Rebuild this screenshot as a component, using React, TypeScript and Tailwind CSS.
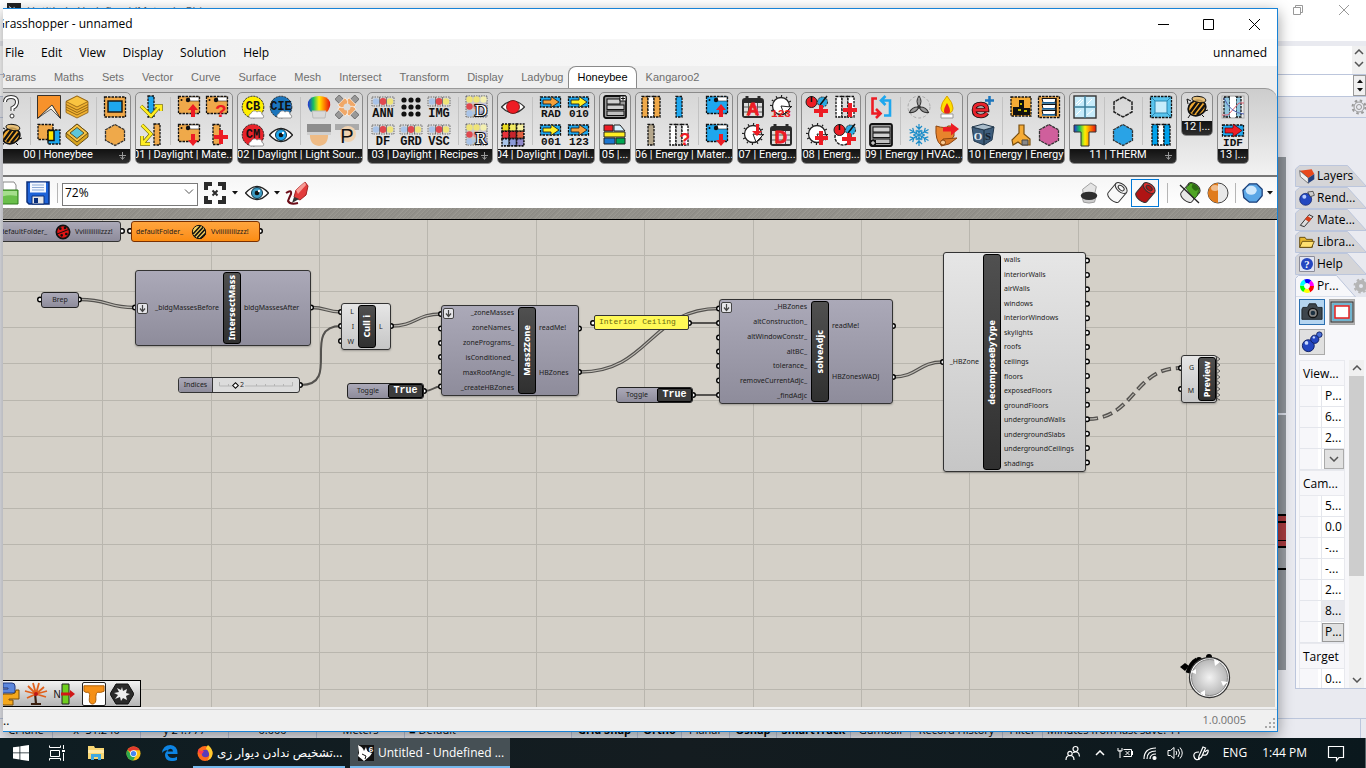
import React from "react";

type Kids = { children?: React.ReactNode };

const UI = "font-['Open_Sans','Noto_Sans',sans-serif]";
const GH = "font-['Liberation_Sans',Arial,sans-serif]";

function Svg({ children, size = "size-6" }: Kids & { size?: string }) {
  return (
    <svg viewBox="0 0 24 24" className={`${size} shrink-0`} aria-hidden="true" fill="none">
      {children}
    </svg>
  );
}

/* ---------- ribbon icon pieces ---------- */

const dash = { stroke: "#111", strokeWidth: 1.3, strokeDasharray: "2.5 1" };

function Label({ t, x = 12, y = 22, s = 9, fill = "#111" }: { t: string; x?: number; y?: number; s?: number; fill?: string }) {
  return (
    <text x={x} y={y} fontSize={s} fontWeight="bold" fill={fill} textAnchor="middle" fontFamily="Liberation Mono, monospace">
      {t}
    </text>
  );
}

function Disc({ c, t }: { c: string; t: string }) {
  return (
    <Svg>
      <circle cx="12" cy="12" r="10.8" fill={c} stroke="#222" strokeWidth="1" strokeDasharray="2 1" />
      <Label t={t} y={15} s={12} />
      <path d="M9 23a2.500 2.500 0 0 1 1-4.500 3.500 3.500 0 0 1 6-1.500 3 3 0 0 1 5 2.500 2 2 0 0 1 1 3.500z" fill="#fff" stroke="#777" strokeWidth=".7" />
    </Svg>
  );
}

function PaintBox({ c, mark }: { c: string; mark: string }) {
  return (
    <Svg>
      <rect x="1.5" y="1.5" width="21" height="17" fill={c} {...dash} />
      <path d="M12 2h10v4H13z" fill="#fff" stroke="#222" strokeWidth=".6" />
      <circle cx="11" cy="5" r="2.2" fill="#111" />
      <circle cx="4.5" cy="5" r="1" fill="#111" />
      {mark === "up" && <path d="M16 9l5 6h-3v7h-4v-7h-3z" fill="#ed1c24" />}
      {mark === "down" && <path d="M16 23l-5-6h3v-6h4v6h3z" fill="#ed1c24" />}
      {mark === "?" && <Label t="?" x={16} y={22} s={19} fill="#ed1c24" />}
    </Svg>
  );
}

function Film({ t }: { t: string }) {
  return (
    <Svg>
      <rect x="1" y="2" width="22" height="9" fill="#d8d8d8" stroke="#555" strokeWidth=".8" strokeDasharray="1.500 1" />
      <circle cx="5" cy="6.500" r="3.200" fill="#a9c4e8" />
      <circle cx="12" cy="6.500" r="3.400" fill="#e0484f" />
      <circle cx="19" cy="6.500" r="3.200" fill="#efe478" />
      <path d="M8.500 2v9M15.500 2v9" stroke="#555" strokeWidth=".7" />
      <Label t={t} y={21.5} s={12} />
    </Svg>
  );
}

function Letters({ t }: { t: string }) {
  const cs = ["#efe478", "#efe478", "#f3efb0", "#e0484f", "#e58a8a", "#c9c0e0", "#a9c4e8", "#a9c4e8", "#9aa0d0"];
  return (
    <Svg>
      <rect x="1" y="1" width="21" height="21" fill="#c9c9c9" stroke="#444" strokeWidth=".8" strokeDasharray="1.500 1" />
      {cs.map((c, i) => (
        <circle key={i} cx={4.5 + (i % 3) * 7} cy={4.5 + Math.floor(i / 3) * 7} r="3.200" fill={c} />
      ))}
      <text x="16" y="21" fontSize="17" textAnchor="middle" fill="#fff" stroke="#111" strokeWidth="2.200" paintOrder="stroke" fontFamily="Liberation Serif, serif">
        {t}
      </text>
    </Svg>
  );
}

function Arrow({ t, c }: { t: string; c: string }) {
  return (
    <Svg>
      <rect x="1.500" y="2" width="20" height="10" fill="#1ea7ee" {...dash} />
      <path d="M4 5h8V1.500l8 5.500-8 5.500V9H4z" fill={c} stroke="#222" strokeWidth=".9" />
      <Label t={t} y={21.5} s={11} />
    </Svg>
  );
}

function Wall({ fills, extra }: { fills: string[]; extra?: string }) {
  const w = 18 / fills.length;
  return (
    <Svg>
      {fills.map((f, i) => (
        <rect key={i} x={3 + i * w} y="1.500" width={w} height="20.500" fill={f} {...dash} />
      ))}
      {extra === "+" && <path d="M10 13h5V8h4v5h5v4h-5v5h-4v-5h-5z" fill="#ed1c24" />}
      {extra === "?" && <Label t="?" x={18} y={22} s={18} fill="#ed1c24" />}
    </Svg>
  );
}

function Clock({ extra }: { extra?: string }) {
  return (
    <Svg>
      <circle cx="12" cy="11" r="8.500" fill="#fff" stroke="#222" strokeWidth="1.300" />
      <circle cx="12" cy="11" r="10" stroke="#222" strokeWidth="2" strokeDasharray="1.200 4" />
      <path d="M12 11l10 1-7 7z" fill="#fff" stroke="#222" strokeWidth="1" />
      {extra === "123" && <Label t="123" y={22} s={11} fill="#ed1c24" />}
      {extra === "v" && <path d="M15 1h3v7h3l-5 5-5-5h4z" fill="#ed1c24" />}
      {extra === "+" && <path d="M10 13h4V8h4v5h5v4h-5v5h-4v-5h-4z" fill="#ed1c24" />}
    </Svg>
  );
}

function Calendar({ t }: { t: string }) {
  return (
    <Svg>
      <rect x="1" y="3" width="22" height="20" rx="3" fill="#2b2b2b" />
      <path d="M6 1v4M18 1v4" stroke="#2b2b2b" strokeWidth="3" />
      <path d="M3 8h18v13H3z" fill="#ddd" />
      <path d="M3 12h18M3 17h18M7.500 8v13M16.500 8v13" stroke="#555" />
      <text x="12" y="20" fontSize="17" fontWeight="bold" textAnchor="middle" fill="#ed1c24" stroke="#ed1c24" fontFamily="Liberation Sans, sans-serif">
        {t}
      </text>
    </Svg>
  );
}

function Knobs({ clock }: { clock?: boolean }) {
  return (
    <Svg>
      {clock && <circle cx="10" cy="14" r="8" fill="#fff" stroke="#222" strokeDasharray="3 1" strokeWidth="1.500" />}
      <circle cx="6.500" cy="7" r="5.500" fill="#ed1c24" stroke="#222" />
      <circle cx="17.500" cy="7" r="5" fill="#29a8e0" stroke="#222" strokeDasharray="2 1" />
      <path d="M6.500 7V1M15 10l7-9" stroke="#111" strokeWidth="1.500" />
      <path d="M9 14h5v-4h4v4h5v4h-5v4h-4v-4H9z" fill="#ed1c24" />
    </Svg>
  );
}

function Hexa({ c }: { c: string }) {
  return (
    <Svg>
      <path d="M12 1.500l9.500 5.300v10.500L12 22.500 2.500 17.300V6.800z" fill={c} stroke="#333" strokeWidth="1.300" strokeDasharray="3 .8" />
    </Svg>
  );
}

function Drawers({ flip }: { flip?: boolean }) {
  return (
    <Svg>
      <rect x="1" y="1" width="22" height="22" rx="2" fill="#999" stroke="#111" strokeWidth="1.800" />
      <rect x="4" y="4" width={flip ? 17 : 13} height="5" fill="#d0d0d0" stroke="#111" />
      <rect x="4" y="10" width="17" height="4.500" fill="#d0d0d0" stroke="#111" />
      <rect x="4" y="16" width="17" height="4.500" fill="#c0c0c0" stroke="#111" />
      {flip ? (
        <>
          <path d="M1 17h6v6H1z" fill="#111" />
          <path d="M2 20h4M4 18v4" stroke="#fff" />
        </>
      ) : (
        <path d="M17 1h6v5h-6zM18 3.500h4M20 1.500v4" fill="#fff" stroke="#111" />
      )}
    </Svg>
  );
}

function Bee() {
  return (
    <Svg>
      <ellipse cx="12" cy="13" rx="9" ry="7.500" transform="rotate(-25 12 13)" fill="#f0a830" stroke="#111" strokeWidth="1.800" />
      <path d="M5 17L13 6M8 19l9-12M12 20l8-10" stroke="#111" strokeWidth="2.400" />
      <ellipse cx="14" cy="4.500" rx="7" ry="3" fill="#e8b860" fillOpacity=".8" stroke="#111" transform="rotate(8 14 4)" />
      <path d="M3 9l-1-5 4 2M20 16l3-1M17 20l2 2M5 20l-2 3" stroke="#111" />
    </Svg>
  );
}

function EyeIcon({ iris = "#1ea7ee" }: { iris?: string }) {
  return (
    <Svg>
      <path d="M.5 12Q12-1 23.500 12 12 25 .5 12z" fill="#fff" stroke="#222" strokeWidth="1.300" />
      <circle cx="12" cy="12" r="5.500" fill={iris} stroke="#134" />
      <circle cx="12" cy="12" r="2.300" fill="#111" />
      <circle cx="14" cy="10" r="1.200" fill="#fff" />
    </Svg>
  );
}

const icons: Record<string, React.ReactNode> = {
  question: (
    <Svg>
      <path d="M6 7q0-5 6-5t6 5q0 4-4.500 6v3" stroke="#333" strokeWidth="4" />
      <path d="M6 7q0-5 6-5t6 5q0 4-4.500 6v3" stroke="#fff" strokeWidth="2" />
      <circle cx="13" cy="21" r="2" fill="#fff" stroke="#333" />
    </Svg>
  ),
  bee: <Bee />,
  mass: (
    <Svg>
      <path d="M.5.5h23v23L15 10 .5 23.500z" fill="#f7922b" stroke="#222" strokeWidth=".9" />
      <path d="M1 23L15 10l8 13-9-9z" fill="#fff3df" stroke="#222" strokeWidth=".7" />
    </Svg>
  ),
  zones: (
    <Svg>
      <rect x="1" y="1.500" width="15" height="15" fill="#f0a848" {...dash} />
      <rect x="11" y="7" width="12" height="14" fill="#1ea7ee" {...dash} />
      <rect x="11" y="7.500" width="6" height="10" fill="#ffe600" stroke="#111" strokeWidth="1.500" />
    </Svg>
  ),
  stack: (
    <Svg>
      <path d="M12 1l11 5.500v11L12 23 1 17.500v-11z" fill="#f0b232" stroke="#8a5c10" strokeWidth=".8" />
      <path d="M1 9.500L12 15l11-5.500M1 12l11 5.500L23 12M1 14.500L12 20l11-5.500" stroke="#8a5c10" strokeWidth=".9" />
      <path d="M12 1l11 5.500L12 12 1 6.500z" fill="#f9c440" stroke="#8a5c10" strokeWidth=".8" />
    </Svg>
  ),
  layers: (
    <Svg>
      <path d="M12 1l11 9v4l-11 9L1 14v-4z" fill="#d9a520" stroke="#5b4310" strokeWidth=".9" />
      <path d="M12 1l11 9-11 9L1 10z" fill="#f6c447" stroke="#5b4310" strokeWidth=".9" />
      <path d="M12 4.500l7 5.500-7 5.500L5 10z" fill="#5dc6d8" stroke="#5b4310" strokeWidth=".9" />
    </Svg>
  ),
  frame: (
    <Svg>
      <rect x="1.500" y="2" width="21" height="20" fill="#f0a848" {...dash} />
      <rect x="5" y="6" width="14" height="11" fill="#1ea7ee" stroke="#111" strokeWidth="1.400" />
    </Svg>
  ),
  hexOrange: <Hexa c="#efa94a" />,
  hexBlue: <Hexa c="#29a3e6" />,
  hexPink: <Hexa c="#cf5f9c" />,
  hexLine: (
    <Svg>
      <path d="M12 2l9 5v10l-9 5-9-5V7z" stroke="#222" strokeWidth="1.500" strokeDasharray="4 .8" />
    </Svg>
  ),
  ray1: (
    <Svg>
      <rect x="9" y="1" width="6" height="21" fill="#1ea7ee" {...dash} />
      <path d="M2 11l10 10 9-10M16 11h6v5" stroke="#5b5300" strokeWidth="3.600" />
      <path d="M2 11l10 10 9-10M16 11h6v5" stroke="#ffee22" strokeWidth="2.600" />
    </Svg>
  ),
  ray2: (
    <Svg>
      <rect x="15" y="1" width="6" height="21" fill="#efa94a" {...dash} />
      <path d="M3 2l9 9-8 9M3 13v8h8" stroke="#5b5300" strokeWidth="3.600" />
      <path d="M3 2l9 9-8 9M3 13v8h8" stroke="#ffee22" strokeWidth="2.600" />
    </Svg>
  ),
  boxUp: <PaintBox c="#efa94a" mark="up" />,
  boxDown: <PaintBox c="#efa94a" mark="down" />,
  boxAsk: <PaintBox c="#efa94a" mark="?" />,
  blueUp: <PaintBox c="#1ea7ee" mark="up" />,
  blueDown: <PaintBox c="#1ea7ee" mark="down" />,
  wallPlus: (
    <Svg>
      <rect x="8" y="1.500" width="7" height="20" fill="#efa94a" {...dash} />
      <path d="M9 12h5V7h4v5h5v4h-5v5h-4v-5H9z" fill="#ed1c24" />
    </Svg>
  ),
  cb: <Disc c="#ffee00" t="CB" />,
  cm: <Disc c="#e8232b" t="CM" />,
  cie: <Disc c="#1b75bc" t="CIE" />,
  eye: <EyeIcon />,
  lampRainbow: (
    <Svg>
      <defs>
        <linearGradient id="rb">
          <stop offset="0" stopColor="#2430d8" />
          <stop offset=".25" stopColor="#18c060" />
          <stop offset=".5" stopColor="#ffee00" />
          <stop offset=".75" stopColor="#ff7a00" />
          <stop offset="1" stopColor="#e01010" />
        </linearGradient>
      </defs>
      <path d="M4 17Q0 12 1 7q2-6 11-6t11 6q1 5-3 10z" fill="url(#rb)" />
      <path d="M5 16h14l-1 7H6z" fill="#d9d9d9" stroke="#bbb" />
    </Svg>
  ),
  lampGray: (
    <Svg>
      <path d="M3 10h18q1 12-9 13Q2 22 3 10z" fill="#eebb85" />
      <rect x="0" y="1" width="24" height="10" fill="#8d8d8d" />
      <path d="M0 9h24v3H0z" fill="#cfcfcf" />
    </Svg>
  ),
  fourLamps: (
    <Svg>
      {[45, 135, 225, 315].map((r) => (
        <g key={r} transform={`rotate(${r} 12 12)`}>
          <rect x="9" y="-2" width="6" height="6" fill="#999" stroke="#555" strokeWidth=".7" />
          <path d="M7 4h10q1 6-5 7-6-1-5-7z" fill="#f0a868" stroke="#fff" strokeWidth=".7" />
        </g>
      ))}
      <circle cx="12" cy="12" r="3.500" fill="#dcdcdc" />
    </Svg>
  ),
  lampP: (
    <Svg>
      <rect x="0" y="1" width="24" height="6" fill="#aaa" />
      <circle cx="13" cy="11" r="8" fill="#f0d2b0" />
      <text x="12" y="20" fontSize="20" textAnchor="middle" fill="#111" fontFamily="Liberation Sans, sans-serif">P</text>
    </Svg>
  ),
  ann: <Film t="ANN" />,
  df: <Film t="DF" />,
  grd: <Film t="GRD" />,
  img: <Film t="IMG" />,
  vsc: <Film t="VSC" />,
  dots: (
    <Svg>
      {Array.from({ length: 9 }, (_, i) => (
        <circle key={i} cx={5 + (i % 3) * 7} cy={5 + Math.floor(i / 3) * 7} r="2.600" fill="#111" />
      ))}
    </Svg>
  ),
  ld: <Letters t="D" />,
  lr: <Letters t="R" />,
  redEye: (
    <Svg>
      <path d="M.5 12Q12 0 23.500 12 12 24 .5 12z" fill="#fff" stroke="#333" strokeWidth="1.200" />
      <circle cx="12" cy="12" r="6.500" fill="#ee1c24" stroke="#600" strokeWidth=".7" />
    </Svg>
  ),
  gridColors: (
    <Svg>
      {["#e8d820", "#f2ea60", "#f7f0a0", "#e8323a", "#c8242c", "#e06040", "#a9c4e8", "#8a9ad8", "#9088c8"].map((c, i) => (
        <rect key={i} x={1 + (i % 3) * 7.3} y={1 + Math.floor(i / 3) * 7.3} width="7.300" height="7.300" fill={c} stroke="#111" strokeWidth="1.600" strokeDasharray="2 1" />
      ))}
    </Svg>
  ),
  rad: <Arrow t="RAD" c="#f5a03a" />,
  a010: <Arrow t="010" c="#ffee22" />,
  a001: <Arrow t="001" c="#ffee22" />,
  a123: <Arrow t="123" c="#f5a03a" />,
  drawers: <Drawers />,
  drawers2: <Drawers flip />,
  schedule: (
    <Svg>
      <path d="M1 2h9v6H1z" fill="#ed1c24" stroke="#222" />
      <path d="M11 2h6l5 6H11z" fill="#d8f2ff" stroke="#222" />
      <path d="M1 9h21v5H1z" fill="#ffee22" stroke="#222" />
      <path d="M1 15h11v6H1z" fill="#1b75d0" stroke="#222" />
      <path d="M13 15h9v6h-9z" fill="#00a651" stroke="#222" />
    </Svg>
  ),
  wallOwo: <Wall fills={["#efa94a", "#ffffff", "#efa94a"]} />,
  wallBlue: (
    <Svg>
      <rect x="9" y="1.500" width="6" height="20.500" fill="#1ea7ee" {...dash} />
    </Svg>
  ),
  wallGray: (
    <Svg>
      <rect x="9" y="1.500" width="6" height="20.500" fill="#b5a78c" {...dash} />
    </Svg>
  ),
  wallAsk: <Wall fills={["#fff", "#ddd", "#fff"]} extra="?" />,
  wallPlus2: <Wall fills={["#fff", "#ddd", "#fff"]} extra="+" />,
  wallBwb: <Wall fills={["#00a0ea", "#ffffff", "#00a0ea"]} />,
  calA: <Calendar t="A" />,
  calD: <Calendar t="D" />,
  clock123: <Clock extra="123" />,
  clockDown: <Clock extra="v" />,
  clockPlus: <Clock extra="+" />,
  knobs: <Knobs />,
  knobsClock: <Knobs clock />,
  loop: (
    <Svg>
      <path d="M8 3.500H3.500v15H10M7 14l4.500 4.500L7 23" stroke="#ed1c24" strokeWidth="2.600" />
      <path d="M15 20.500h6v-15h-7M16.500 1L12 5.500l4.500 4.500" stroke="#1ea7ee" strokeWidth="2.600" />
    </Svg>
  ),
  fan: (
    <Svg>
      <circle cx="12" cy="12" r="11" stroke="#aaa" strokeDasharray="3 2" />
      {[0, 120, 240].map((r) => (
        <path key={r} d="M12 12q-4-6 0-11 4 5 0 11z" transform={`rotate(${r} 12 12)`} fill="#999" stroke="#333" />
      ))}
      <circle cx="12" cy="12" r="1.800" fill="#333" />
    </Svg>
  ),
  snow: (
    <Svg>
      {[0, 60, 120, 180, 240, 300].map((r) => (
        <path key={r} d="M12 12V1M12 6L9 3M12 6l3-3M12 9.500L9.500 7M12 9.500L14.500 7" transform={`rotate(${r} 12 12)`} stroke="#1b8cc8" strokeWidth="1.200" />
      ))}
    </Svg>
  ),
  flame: (
    <Svg>
      <path d="M12 1q6 7 6 12t-6 6q-6-1-6-6t6-12z" fill="#ffe000" stroke="#d8a000" />
      <path d="M12 8q3 5 3 8t-3 3q-3 0-3-3t3-8z" fill="#e8231c" />
      <path d="M6 19h12v4H6z" fill="#fff" stroke="#999" />
    </Svg>
  ),
  pipe: (
    <Svg>
      <path d="M1 3q10 3 12 0h6v10q-5 8-13 9Q0 18 1 3z" fill="#e8842c" stroke="#8a4510" />
      <path d="M8 16l14-1-8 6-8 2z" fill="#d87828" stroke="#8a4510" />
      <circle cx="8" cy="19.500" r="2.500" fill="#f8c890" stroke="#8a4510" />
      <path d="M8 4h8V0l8 6-8 6.500V8.500H8z" fill="#ed1c24" />
    </Svg>
  ),
  eplus: (
    <Svg>
      <path d="M4 15h12q0-6-6-6-7 0-7 6 0 6 7 6 4 0 6-3" stroke="#111" strokeWidth="4.600" />
      <path d="M4 15h12q0-6-6-6-7 0-7 6 0 6 7 6 4 0 6-3" stroke="#e8232b" strokeWidth="2.800" />
      <path d="M18.500 1v9M14 5.500h9" stroke="#1b75bc" strokeWidth="2.500" />
    </Svg>
  ),
  os: (
    <Svg>
      <path d="M1 4l12 3v15L3 18zM13 7l10-3-2 13-8 5z" fill="#3d5c7a" stroke="#22384d" />
      <path d="M1 4l11-3 11 3-10 3z" fill="#a9bccb" stroke="#22384d" />
      <text x="7" y="17" fontSize="11" fontWeight="bold" textAnchor="middle" fill="#e5edf3" fontFamily="Liberation Serif, serif">O</text>
      <text x="17" y="17" fontSize="11" fontWeight="bold" textAnchor="middle" fill="#16222e" fontFamily="Liberation Serif, serif">S</text>
    </Svg>
  ),
  chart: (
    <Svg>
      <rect x="2" y="2" width="20" height="19" fill="#f5ab35" {...dash} />
      <path d="M4 12h6V5h5v8h6v7H4z" fill="#111" />
      <path d="M9 15h3M11 9h2M15 16h3" stroke="#ffee00" strokeWidth="1.500" />
    </Svg>
  ),
  shades: (
    <Svg>
      <rect x="1.500" y="1.500" width="21" height="21" fill="#f0a848" {...dash} />
      <path d="M5 3.500h14l-1 4H6zM5 9.500h14l-1 4H6zM5 15.500h14l-1 4H6z" fill="#fff" stroke="#111" />
      <path d="M5 8h14M5 14h14M5 20h14" stroke="#1b75bc" strokeWidth="1.600" />
      <path d="M19 3v18" stroke="#111" strokeWidth="1.500" />
    </Svg>
  ),
  duct: (
    <Svg>
      <path d="M10 2h5v9l6 5v6h-8l-4-3-5 3-1-5 7-7z" fill="#f5ab35" stroke="#7a4f10" strokeWidth="1.200" />
      <path d="M13 17h6v5h-6z" fill="#888" stroke="#444" />
    </Svg>
  ),
  window: (
    <Svg>
      <rect x="1" y="1" width="22" height="22" fill="#c7ecfb" stroke="#333" strokeWidth="1.400" />
      <path d="M12 1v22M1 12h22" stroke="#3c7f9c" strokeWidth="1.500" />
      <path d="M3 9l5-5M5 10l5-5M14 9l5-5M3 20l5-5M14 20l6-5" stroke="#fff" />
    </Svg>
  ),
  thermT: (
    <Svg>
      <path d="M1 2h22v7h-7v14H8V9H1z" fill="url(#rb)" stroke="#333" />
    </Svg>
  ),
  bevel: (
    <Svg>
      <rect x="1.500" y="1.500" width="21" height="21" fill="#58c4ee" {...dash} />
      <rect x="6" y="6" width="12" height="12" fill="#c7ecfb" stroke="#2a86b0" />
      <path d="M2 2l4 4M22 2l-4 4M2 22l4-4M22 22l-4-4" stroke="#2a86b0" />
    </Svg>
  ),
  paper: (
    <Svg>
      <rect x="1" y="1" width="22" height="22" fill="#ececec" stroke="#aaa" />
      <rect x="3" y="2" width="6" height="20" fill="#8fc6de" {...dash} />
      <rect x="15" y="2" width="5" height="20" fill="#8fc6de" {...dash} />
      <rect x="9" y="2" width="6" height="20" fill="#fff" />
      <path d="M1 20h6L18 8h5" stroke="#e06070" />
      <path d="M3 3q6 15 20 16" stroke="#5060b0" />
    </Svg>
  ),
  idf: (
    <Svg>
      <rect x="1.500" y="2" width="21" height="11" fill="#1ea7ee" {...dash} />
      <path d="M4 5h8V1l9 6.500-9 6.500v-4H4z" fill="#ed1c24" stroke="#500" strokeWidth=".7" />
      <Label t="IDF" y={22.5} s={11} />
    </Svg>
  ),
};

/* ---------- ribbon ---------- */

type Group = { title: string; cols: string[][]; plus?: boolean };

const groups: Group[] = [
  { title: "00 | Honeybee", plus: true, cols: [["question", "bee"], ["|"], ["mass", "zones"], ["stack", "layers"], ["|"], ["frame", "hexOrange"]] },
  { title: "01 | Daylight | Mate...", cols: [["ray1", "ray2"], ["|"], ["boxUp", "boxDown"], ["boxAsk", "wallPlus"]] },
  { title: "02 | Daylight | Light Sour...", cols: [["cb", "cm"], ["cie", "eye"], ["|"], ["lampRainbow", "lampGray"], ["fourLamps", "lampP"]] },
  { title: "03 | Daylight | Recipes", plus: true, cols: [["ann", "df"], ["dots", "grd"], ["img", "vsc"], ["|"], ["ld", "lr"]] },
  { title: "04 | Daylight | Dayli...", cols: [["redEye", "gridColors"], ["|"], ["rad", "a001"], ["a010", "a123"]] },
  { title: "05 |...", cols: [["drawers", "schedule"]] },
  { title: "06 | Energy | Mater...", cols: [["wallOwo", "wallGray"], ["wallBlue", "wallAsk"], ["|"], ["blueUp", "blueDown"]] },
  { title: "07 | Energ...", cols: [["calA", "clockDown"], ["clock123", "calD"]] },
  { title: "08 | Energ...", cols: [["knobs", "clockPlus"], ["wallPlus2", "knobsClock"]] },
  { title: "09 | Energy | HVAC...", cols: [["loop", "drawers2"], ["|"], ["fan", "snow"], ["flame", "pipe"]] },
  { title: "10 | Energy | Energy", cols: [["eplus", "os"], ["|"], ["chart", "duct"], ["shades", "hexPink"]] },
  { title: "11 | THERM", plus: true, cols: [["window", "thermT"], ["|"], ["hexLine", "hexBlue"], ["|"], ["bevel", "wallBwb"]] },
  { title: "12 |...", cols: [["bee"]] },
  { title: "13 |...", cols: [["paper", "idf"]] },
];

function RibbonGroup({ g }: { g: Group }) {
  return (
    <section className="shrink-0 overflow-hidden rounded-[5px] border border-[#8a8a8a] bg-linear-to-b from-[#d6d6d6] to-[#ebebeb]">
      <div className="flex px-px">
        {g.cols.map((col, i) =>
          col[0] === "|" ? (
            <div key={i} className="flex w-[10px] justify-center py-1">
              <div className="w-px bg-[#c2c2c2]" />
            </div>
          ) : (
            <div key={i} className="flex flex-col">
              {col.map((name, j) => (
                <button key={j} type="button" aria-label={name} className="flex size-7 items-center justify-center">
                  {icons[name]}
                </button>
              ))}
            </div>
          )
        )}
      </div>
      <div className="relative h-[14px]">
        <div className={`absolute inset-0 flex items-start bg-linear-to-b from-[#111] to-[#2e2e2e] font-['Roboto','Liberation_Sans',sans-serif] text-[11px] leading-3 text-white ${g.plus ? "justify-between pr-1" : "justify-center"}`}>
          {g.plus && <span className="w-px" />}
          <span className="whitespace-nowrap">{g.title}</span>
          {g.plus && (
            <svg viewBox="0 0 7 8" className="mt-[3px] h-2 w-[7px]" aria-hidden="true">
              <path d="M3.500 0v7M0 3.500h7M1.500 5l2 2.500 2-2.500" fill="none" stroke="#999" />
            </svg>
          )}
        </div>
      </div>
    </section>
  );
}

const tabs = ["Params", "Maths", "Sets", "Vector", "Curve", "Surface", "Mesh", "Intersect", "Transform", "Display", "Ladybug", "Honeybee", "Kangaroo2"];

function Ribbon() {
  return (
    <>
      <nav className={`flex h-[22px] items-end overflow-hidden bg-[#efefef] text-[11px] ${GH}`}>
        <div className="-ml-[14px] flex items-end">
          {tabs.map((t) =>
            t === "Honeybee" ? (
              <button key={t} type="button" className="-ml-1 h-[22px] rounded-t-lg border border-b-0 border-[#8a8a8a] bg-white px-2 text-black">{t}</button>
            ) : (
              <button key={t} type="button" className="h-[22px] px-[9px] text-[#6e6e6e]">{t}</button>
            )
          )}
        </div>
      </nav>
      <div className="h-[89px] shrink-0 overflow-hidden rounded-tr-xl border-b-2 border-b-[#777] border-t border-t-[#999] bg-linear-to-b from-[#cdcdcd] to-[#f2f2f2]">
        <div className="-ml-2 flex items-start gap-1 pt-[3px]">
          {groups.map((g) => (
            <RibbonGroup key={g.title} g={g} />
          ))}
        </div>
      </div>
    </>
  );
}

/* ---------- canvas toolbar ---------- */

function Sep() {
  return <div className="h-5 w-px bg-[#b5b5b5]" />;
}

function Caret() {
  return (
    <svg viewBox="0 0 6 4" className="h-1 w-[6px]" aria-hidden="true">
      <path d="M0 0h6L3 3.500z" fill="#111" />
    </svg>
  );
}

function Can({ body, top }: { body: string; top: string }) {
  return (
    <g transform="rotate(40 12 12)" stroke="#333">
      <path d="M5 5.500v12a7 3.500 0 0 0 14 0v-12z" fill={body} />
      <ellipse cx="12" cy="5.500" rx="7" ry="4" fill={top} />
      <ellipse cx="12" cy="5.500" rx="3.500" ry="2" fill={body} />
    </g>
  );
}

function CanvasToolbar() {
  const tool = "flex size-7 items-center justify-center";
  return (
    <div className="flex h-[31px] shrink-0 items-center bg-linear-to-b from-[#f6f6f6] to-white">
      <button type="button" aria-label="Open" className="-ml-2 mr-[7px]">
        <Svg>
          <path d="M8 1h11l2 3v8H8z" fill="#fff" stroke="#888" />
          <path d="M1 9h22v14H1z" fill="#6abf4b" stroke="#2e7d1c" />
          <path d="M2 10h20v5Q12 13 2 17z" fill="#a5de8c" />
        </Svg>
      </button>
      <button type="button" aria-label="Save">
        <Svg>
          <path d="M1 1h22v22H3l-2-2z" fill="#1e63d8" stroke="#0b2f7a" strokeWidth="1.500" />
          <path d="M4 1.500h16v10H4z" fill="#f4f8ff" />
          <path d="M6 4h12M6 6.500h12M6 9h12" stroke="#8ba9d6" />
          <path d="M6 15h12v8H6z" fill="#e6e6e6" stroke="#0b2f7a" />
          <path d="M8 17h4v5H8z" fill="#0b2f7a" />
        </Svg>
      </button>
      <div className="ml-[7px] mr-1">
        <Sep />
      </div>
      <div className="relative">
        <select aria-label="Zoom" defaultValue="72%" className={`h-[23px] w-[136px] appearance-none border border-[#7a7a7a] bg-white px-[2px] pb-[2px] text-[12px] leading-4 text-black ${UI}`}>
          <option>72%</option>
          <option>100%</option>
        </select>
        <svg viewBox="0 0 10 6" className="pointer-events-none absolute right-1 top-[10px] h-[6px] w-[10px]" aria-hidden="true">
          <path d="M1 .5l4 4 4-4" fill="none" stroke="#555" />
        </svg>
      </div>
      <div className="ml-[5px] flex items-center gap-[5px]">
        <button type="button" aria-label="Zoom extents">
          <Svg>
            <path d="M3 9V3h6M15 3h6v6M21 15v6h-6M9 21H3v-6" stroke="#2b2b2b" strokeWidth="4" />
            <path d="M9.500 9.500l5 5M14.500 9.500l-5 5" stroke="#2b2b2b" strokeWidth="2" />
          </Svg>
        </button>
        <Caret />
        <button type="button" aria-label="Preview" className="ml-[2px]">
          <EyeIcon iris="#3e9cc4" />
        </button>
        <Caret />
        <button type="button" aria-label="Sketch">
          <Svg>
            <path d="M9 16l2-7 9-8 3 4-2 9-6 5z" fill="#e23b3b" stroke="#a02020" />
            <path d="M11 9l9-8 1 3-8 9z" fill="#f79a94" />
            <path d="M9 16l5 2-7 4z" fill="#333" />
            <path d="M1 12q6-4 5 1-2 4-3 7 2 4 10 2" stroke="#6c0d18" strokeWidth="2" />
          </Svg>
        </button>
      </div>
      <div className="ml-auto flex items-center pr-1">
        <button type="button" aria-label="No preview" className={tool}>
          <Svg size="size-[22px]">
            <path d="M5 8l9-7 6 4-2 9-12 1z" fill="#e4e4e4" stroke="#999" />
            <path d="M4 15q8 6 16 0l-2 7q-6 2-12 0z" fill="#ccc" stroke="#999" />
            <ellipse cx="12" cy="15" rx="9" ry="4.500" fill="#2e2e2e" />
          </Svg>
        </button>
        <button type="button" aria-label="Wireframe preview" className={tool}>
          <Svg>
            <Can body="#f8f8f8" top="#eee" />
          </Svg>
        </button>
        <button type="button" aria-label="Shaded preview" className={`border border-[#0078d7] ${tool}`}>
          <Svg>
            <Can body="#b01414" top="#d83030" />
          </Svg>
        </button>
        <div className="mx-2">
          <Sep />
        </div>
        <button type="button" aria-label="Selected preview" className={tool}>
          <Svg>
            <Can body="#e8e8e8" top="#5db52c" />
            <path d="M8 7l5-5 8 6-2 7-3 3z" fill="#4fa524" stroke="#235a10" strokeWidth=".7" />
            <ellipse cx="17" cy="6.500" rx="3.500" ry="2.500" fill="#2c6b12" transform="rotate(40 17 6.500)" />
            <path d="M2 4l19 18" stroke="#222" strokeWidth="1.300" />
          </Svg>
        </button>
        <button type="button" aria-label="Document preview" className={tool}>
          <Svg>
            <circle cx="12" cy="12" r="10" fill="#e8e8e8" stroke="#444" />
            <path d="M12 2v20a10 10 0 0 1 0-20z" fill="#e07b1c" />
            <ellipse cx="9" cy="7" rx="4" ry="3" fill="#fff" opacity=".5" />
          </Svg>
        </button>
        <div className="mx-[3px]">
          <Sep />
        </div>
        <button type="button" aria-label="Mesh quality" className={tool}>
          <Svg size="size-[22px]">
            <path d="M8 2h8l6 6v7l-6 7H8l-6-5-1-8z" fill="#5aa6e6" stroke="#1c3f78" strokeWidth="1.400" />
            <ellipse cx="10" cy="9" rx="6" ry="5" fill="#cfe8fc" />
          </Svg>
        </button>
        <Caret />
      </div>
    </div>
  );
}

/* ---------- node canvas ---------- */

const verticals = [102, 211, 319, 427, 536, 644, 753, 861, 969, 1078, 1186];
const horizontals = [255, 291, 327, 363, 400, 436, 472, 508, 544, 580, 616, 652, 689];

const wires: { d: string; kind: "list" | "item" | "tree" }[] = [
  { d: "M80 299.500C108 299.500 108 307.500 134 307.500", kind: "list" },
  { d: "M312 307.500C326 307.500 326 312 341 312", kind: "list" },
  { d: "M301 385C342 385 300 326 341 326", kind: "item" },
  { d: "M391 326C416 326 416 314 441 314", kind: "list" },
  { d: "M425 391C433 391 433 386.500 441 386.500", kind: "item" },
  { d: "M580 372C650 372 650 308.500 719 308.500", kind: "list" },
  { d: "M689 323H719", kind: "item" },
  { d: "M693 395H719", kind: "item" },
  { d: "M893 377C918 377 918 362 943 362", kind: "list" },
  { d: "M1088 419C1134 419 1134 368 1180 368", kind: "tree" },
];

const grips: [number, number[]][] = [
  [122, [231]], [130, [231]], [260, [231]],
  [40, [299.5]], [79, [299.5]],
  [135, [307.5]], [311, [307.5]],
  [300, [385]],
  [341, [312, 326, 341]], [391, [326]],
  [424, [391]],
  [441, [314, 328.5, 343, 357, 372, 386.5]], [579, [328.5, 372]],
  [593, [323]], [689, [323]], [693, [395]],
  [719, [308.5, 323, 337.5, 351.5, 366, 380.5, 395]], [893, [326, 377]],
  [943, [362]],
  [1087, Array.from({ length: 15 }, (_, i) => 260.5 + i * 14.43)],
  [1181, [368, 389]],
];

function Wires() {
  return (
    <svg className="absolute left-0 top-0 h-[487px] w-[1272px]" viewBox="3 220 1272 487" fill="none" aria-hidden="true">
      {wires.map((w, i) => {
        const tree = w.kind === "tree";
        return (
          <g key={i}>
            <path d={w.d} stroke="#54524f" strokeWidth={w.kind === "item" ? 2 : tree ? 4 : 3.5} strokeDasharray={tree ? "10 5" : undefined} />
            {w.kind !== "item" && <path d={w.d} stroke="#bdbab3" strokeWidth="1.200" strokeDasharray={tree ? "8 7" : undefined} strokeDashoffset={tree ? -1 : undefined} />}
          </g>
        );
      })}
      {grips.map(([x, ys]) => ys.map((y) => <circle key={`${x}-${y}`} cx={x} cy={y} r="2.300" fill="#fff" stroke="#000" strokeWidth="1.400" />))}
    </svg>
  );
}

function Capsule({ name }: { name: string }) {
  return (
    <div className="my-px flex w-[18px] shrink-0 items-center justify-center rounded-[3px] border border-black bg-linear-to-b from-[#505050] to-[#303030]">
      <span className="rotate-180 whitespace-nowrap text-[9px] font-extrabold leading-4 text-white [writing-mode:vertical-rl]">{name}</span>
    </div>
  );
}

type NodeProps = { place: string; tone: "mauve" | "silver"; name: string; ins: string[]; outs: string[]; outW: string; down?: boolean };

function Node({ place, tone, name, ins, outs, outW, down }: NodeProps) {
  const fill = tone === "mauve" ? "from-[#aba9b8] to-[#8e8c9b]" : "from-[#e6e6e6] to-[#c6c6c6]";
  return (
    <article className={`absolute flex rounded-[3px] border border-[#333] bg-linear-to-b shadow-[0_1px_2px_rgba(0,0,0,.25)] ${fill} ${place}`}>
      <ul className="flex flex-1 flex-col pr-1">
        {ins.map((t, i) => (
          <li key={t} className="flex flex-1 items-center">
            {down && i === 0 && (
              <svg viewBox="0 0 11 11" className="ml-px size-[11px]" aria-hidden="true">
                <rect x=".5" y=".5" width="10" height="10" rx="1.500" fill="#e4e4e8" stroke="#444" />
                <path d="M5.500 2v6M3 5.500l2.500 3L8 5.500" fill="none" stroke="#444" strokeWidth="1.200" />
              </svg>
            )}
            <span className="ml-auto leading-[10px]">{t}</span>
          </li>
        ))}
      </ul>
      <Capsule name={name} />
      <ul className={`flex flex-col ${outW}`}>
        {outs.map((t) => (
          <li key={t} className="flex flex-1 items-center pl-[3px] leading-[10px]">{t}</li>
        ))}
      </ul>
    </article>
  );
}

function Toggle({ place, id }: { place: string; id: string }) {
  return (
    <div className={`absolute flex h-4 w-[77px] rounded-[3px] border border-[#222] bg-linear-to-b from-[#aba9b8] to-[#8e8c9b] ${place}`}>
      <span id={id} className="flex flex-1 items-center justify-center leading-[10px]">Toggle</span>
      <button type="button" aria-labelledby={id} className="w-[35px] rounded-[2px] border border-black bg-[#3c3c3c] font-['Liberation_Mono',monospace] text-[10px] font-bold leading-3 text-white">True</button>
    </div>
  );
}

function Viz({ place, icon }: { place: string; icon: React.ReactNode }) {
  return (
    <div className={`absolute flex h-[21px] items-center gap-1 rounded-[3px] border pl-1 ${place}`}>
      <span className="w-[51px]">defaultFolder_</span>
      {icon}
      <span>Vviiiiiiiiiizzz!</span>
    </div>
  );
}

function Canvas() {
  return (
    <main className="relative min-h-0 flex-1 overflow-hidden bg-[#d4d0c8] font-['Noto_Sans','Open_Sans',sans-serif] text-[7px] leading-[10px] text-[#1c1c1c]">
      <svg className="absolute left-0 top-0 h-[487px] w-[1272px]" viewBox="3 220 1272 487" aria-hidden="true">
        <path d={verticals.map((x) => `M${x + 0.5} 220v487`).join("") + horizontals.map((y) => `M3 ${y + 0.5}h1272`).join("")} stroke="#b9b6ae" fill="none" />
      </svg>
      <Wires />

      <Viz
        place="left-[-8px] top-px w-[126px] border-[#333] bg-linear-to-b from-[#aba9b8] to-[#8e8c9b]"
        icon={
          <Svg size="size-4">
            <circle cx="12" cy="12" r="10" fill="#e01414" stroke="#111" strokeWidth="2.500" />
            <path d="M3 15L21 8" stroke="#111" strokeWidth="1.500" />
            <path d="M8 5a2 2 0 1 1 0 4 2 2 0 0 1 0-4zM15 4a2 2 0 1 1 0 4 2 2 0 0 1 0-4zM10 15a2 2 0 1 1 0 4 2 2 0 0 1 0-4zM17 13a2 2 0 1 1 0 4 2 2 0 0 1 0-4z" fill="#111" />
          </Svg>
        }
      />
      <Viz
        place="left-[128px] top-px w-[129px] border-[#7a3000] bg-linear-to-b from-[#ffa53d] to-[#fb8c10]"
        icon={
          <Svg size="size-4">
            <circle cx="12" cy="12" r="10" fill="#f4cf5a" stroke="#111" strokeWidth="1.500" />
            <path d="M3 15L14 3M5 19L18 5M9 21L21 8M14 22l8-8" stroke="#111" strokeWidth="2.400" />
          </Svg>
        }
      />

      <div className="absolute left-[38px] top-[72px] flex h-4 w-[38px] items-center justify-center rounded-[3px] border border-[#222] bg-linear-to-b from-[#aba9b8] to-[#8e8c9b]">Brep</div>

      <Node place="left-[132px] top-[50px] h-[76px] w-[176px]" tone="mauve" name="IntersectMass" ins={["_bldgMassesBefore"]} outs={["bldgMassesAfter"]} outW="w-[69px]" down />

      <div className="absolute left-[175px] top-[157px] flex h-4 w-[122px] overflow-hidden rounded-[3px] border border-[#333] bg-[#dcdcdc]">
        <label htmlFor="indices" className="flex w-[34px] items-center justify-center border-r border-[#333] bg-linear-to-b from-[#aba9b8] to-[#8e8c9b]">Indices</label>
        <div className="relative flex flex-1 items-center px-[6px]">
          <svg viewBox="0 0 74 8" className="absolute h-2 w-[74px]" aria-hidden="true">
            <path d="M.5 1v4h73V1M9.500 3v2M37.500 3v2M46.500 3v2M55.500 3v2M64.500 3v2" fill="none" stroke="#b5b5b5" />
          </svg>
          <input id="indices" type="range" min="0" max="10" defaultValue="2" className="relative h-2 w-[74px] appearance-none bg-transparent [&::-webkit-slider-thumb]:size-[5px] [&::-webkit-slider-thumb]:rotate-45 [&::-webkit-slider-thumb]:appearance-none [&::-webkit-slider-thumb]:border [&::-webkit-slider-thumb]:border-black [&::-webkit-slider-thumb]:bg-white" />
          <span className="absolute left-[26px] bg-[#dcdcdc] px-px">2</span>
        </div>
      </div>

      <Node place="left-[338px] top-[83px] h-[47px] w-[50px]" tone="silver" name="Cull i" ins={["L", "I", "W"]} outs={["L"]} outW="w-[14px]" />
      <Toggle place="left-[344px] top-[163px]" id="toggle-a" />
      <Node place="left-[438px] top-[85px] h-[91px] w-[138px]" tone="mauve" name="Mass2Zone" ins={["_zoneMasses", "zoneNames_", "zonePrograms_", "isConditioned_", "maxRoofAngle_", "_createHBZones"]} outs={["readMe!", "HBZones"]} outW="w-[42px]" down />

      <div className="absolute left-[591px] top-[95px] h-[15px] w-[95px] rounded-[2px] border border-[#333] bg-[#fff957] pl-1 font-['Liberation_Mono',monospace] text-[8px] leading-[11px] text-[#6b6a10]">Interior Ceiling</div>
      <Toggle place="left-[613px] top-[167px]" id="toggle-b" />

      <Node place="left-[716px] top-[79px] h-[105px] w-[174px]" tone="mauve" name="solveAdjc" ins={["_HBZones", "altConstruction_", "altWindowConstr_", "altBC_", "tolerance_", "removeCurrentAdjc_", "_findAdjc"]} outs={["readMe!", "HBZonesWADJ"]} outW="w-[63px]" down />

      <Node
        place="left-[940px] top-[32px] h-[220px] w-[143px]"
        tone="silver"
        name="decomposeByType"
        ins={["_HBZone"]}
        outs={["walls", "interiorWalls", "airWalls", "windows", "interiorWindows", "skylights", "roofs", "ceilings", "floors", "exposedFloors", "groundFloors", "undergroundWalls", "undergroundSlabs", "undergroundCeilings", "shadings"]}
        outW="w-[84px]"
      />
      <svg className="absolute left-[1212px] top-[136px] h-12 w-[6px]" viewBox="0 0 6 48" fill="none" aria-hidden="true">
        <path d="M1 0l4 3-4 3 4 3-4 3 4 3-4 3 4 3-4 3 4 3-4 3 4 3-4 3 4 3-4 3 4 2" stroke="#555" />
      </svg>
      <Node place="left-[1178px] top-[135px] h-[48px] w-[36px]" tone="silver" name="Preview" ins={["G", "M"]} outs={[]} outW="w-0" />

      {/* shortcut bar */}
      <div className="absolute bottom-0 left-0 flex h-[27px] w-[138px] items-center gap-1 overflow-hidden border-y border-r border-black bg-linear-to-b from-[#f2f2f2] to-[#b5b5b5]">
        <button type="button" aria-label="Python" className="-ml-[7px]">
          <Svg>
            <path d="M7 1h9q3 0 3 3v7H8q-4 0-4 4H1V7h11V6H7z" fill="#5b86dc" stroke="#223a80" />
            <path d="M17 23H8q-3 0-3-3v-5q0-3 3-3h8q4 0 4-4h3v9H13v1h4z" fill="#f5a81c" stroke="#7a4f08" />
          </Svg>
        </button>
        <button type="button" aria-label="Tree">
          <Svg>
            <path d="M11 11l1 11M7 22h10" stroke="#3a2010" strokeWidth="2.200" />
            <path d="M12 12L1 9M12 12L4 4M12 12L9 1M12 12l3-11M12 12l8-7M12 12l11-3M12 12L3 16M12 12l10 3" stroke="#e0601c" strokeWidth="1.800" />
            <circle cx="12" cy="12" r="2" fill="#c01818" />
          </Svg>
        </button>
        <button type="button" aria-label="Normal" className="mx-px">
          <Svg>
            <text x="4" y="16" fontSize="10" fill="#111" fontFamily="Liberation Sans, sans-serif" textAnchor="middle">N</text>
            <path d="M9 2h7v20H9z" fill="#6fcf1e" stroke="#222" />
            <path d="M8 10.500h9V8l5 4-5 4v-2.500H8z" fill="#d01818" />
          </Svg>
        </button>
        <button type="button" aria-label="Honey" className="rounded-[2px] border border-[#222] bg-white">
          <Svg size="size-[22px]">
            <path d="M1 3h22v6q-4 2-7 1-2 1-2 5 1 8-4 8-4-1-3-7 1-4-1-6Q3 11 1 9z" fill="#f59016" stroke="#a85b05" />
          </Svg>
        </button>
        <button type="button" aria-label="Spark">
          <Svg>
            <path d="M6 2h12l6 10-6 10H6L0 12z" fill="#2a2a2a" stroke="#111" />
            <path d="M12 5l1 4 4-2-1 4 4 1-4 2 1 4-4-2-2 3-1-4-5 2 3-4-4-2 5-1-2-4 4 2z" fill="#eee" />
          </Svg>
        </button>
      </div>

      {/* view compass */}
      <svg className="absolute left-[1174px] top-[432px] h-[50px] w-[56px]" viewBox="0 0 56 50" aria-hidden="true">
        <defs>
          <radialGradient id="ball">
            <stop offset="0" stopColor="#f2f2f2" />
            <stop offset="1" stopColor="#b8b8b8" />
          </radialGradient>
        </defs>
        <path d="M3 15l5-4 4 3-4 5z" fill="#000" />
        <path d="M11 21q3-10 9-13" stroke="#000" strokeWidth="5" fill="none" />
        <circle cx="22" cy="8" r="3" />
        <circle cx="32" cy="5" r="3" />
        <circle cx="32.500" cy="25.500" r="20" fill="#fff" stroke="#333" strokeWidth="1.300" />
        <circle cx="32.500" cy="25.500" r="18" fill="url(#ball)" stroke="#888" />
        <path d="M37 7l6 3-5 4zM51 30l-5 4-2-5zM28 44l-5-3 5-3zM14 20l5-3v5z" fill="#fff" />
      </svg>
    </main>
  );
}

/* ---------- Grasshopper window ---------- */

function GrasshopperWindow() {
  return (
    <section className="absolute bottom-[36px] left-[3px] right-[88px] top-2 z-10 flex flex-col overflow-hidden border-y border-r border-[#1883d7] bg-[#efefef] shadow-[0_4px_14px_rgba(0,0,0,.4)]">
      <header className="flex h-[30px] shrink-0 items-center overflow-hidden bg-white">
        <h1 className="-ml-[7px] whitespace-nowrap text-[12px]">Grasshopper - unnamed</h1>
        <div className="ml-auto flex">
          <button type="button" aria-label="Minimize" className="flex h-[30px] w-[46px] items-center justify-center">
            <svg viewBox="0 0 11 11" className="size-[11px]"><path d="M0 5.500h11" stroke="#000" /></svg>
          </button>
          <button type="button" aria-label="Maximize" className="flex h-[30px] w-[45px] items-center justify-center">
            <svg viewBox="0 0 11 11" className="size-[11px]" fill="none"><path d="M.5.5h10v10H.5z" stroke="#000" /></svg>
          </button>
          <button type="button" aria-label="Close" className="flex h-[30px] w-[46px] items-center justify-center">
            <svg viewBox="0 0 11 11" className="size-[11px]"><path d="M0 0l11 11M11 0L0 11" stroke="#000" /></svg>
          </button>
        </div>
      </header>
      <nav className="flex h-[27px] shrink-0 items-center gap-[17px] bg-linear-to-r from-[#f0f0f0] to-[#fcfcfc] pl-[2px] pr-[10px] text-[12px]">
        {["File", "Edit", "View", "Display", "Solution", "Help"].map((m) => (
          <button key={m} type="button">{m}</button>
        ))}
        <span className="ml-auto">unnamed</span>
      </nav>
      <Ribbon />
      <CanvasToolbar />
      <div className="h-3 shrink-0 border-b border-black bg-[repeating-linear-gradient(135deg,#8d8b85_0px,#94928c_2px,#9d9b94_3px)]" />
      <div className="flex min-h-0 flex-1 flex-col border-r-2 border-[#f4f2ee]">
        <Canvas />
      </div>
      <footer className="mt-[2px] flex h-[22px] shrink-0 items-center border-t border-[#d2d2d2] bg-[#f0f0f0]">
        <span className="text-[12px]">..</span>
        <span className="ml-auto text-[11px] text-[#707070]">1.0.0005</span>
        <svg viewBox="0 0 12 12" className="ml-[18px] mr-px mt-1 size-3" aria-hidden="true">
          <path d="M9 1h2v2H9zM5 5h2v2H5zM9 5h2v2H9zM1 9h2v2H1zM5 9h2v2H5zM9 9h2v2H9z" fill="#a8a8a8" />
        </svg>
      </footer>
    </section>
  );
}

/* ---------- Rhino window behind ---------- */

const panelTabs: { t: string; icon: React.ReactNode }[] = [
  {
    t: "Layers",
    icon: (
      <Svg size="size-4">
        <path d="M1 4l18-2 4 7-9 6z" fill="#e8481c" />
        <path d="M1 4l13 11v8L2 13z" fill="#f0f0f0" stroke="#444" />
        <path d="M14 15l9-6v8l-9 6z" fill="#24407c" />
      </Svg>
    ),
  },
  {
    t: "Rend...",
    icon: (
      <Svg size="size-4">
        <circle cx="10" cy="14" r="9" fill="#2348c0" stroke="#0c1c60" />
        <circle cx="8" cy="10" r="3" fill="#b8ccff" />
        <path d="M13 3l8-1 2 6-6 2z" fill="#ccc" stroke="#222" />
      </Svg>
    ),
  },
  {
    t: "Mate...",
    icon: (
      <Svg size="size-4">
        <path d="M2 20L15 4l6 3-13 15z" fill="#ddd" stroke="#333" strokeWidth="1.500" />
        <path d="M9 11l6 4 4-5-6-4z" fill="#d8401c" />
      </Svg>
    ),
  },
  {
    t: "Libra...",
    icon: (
      <Svg size="size-4">
        <path d="M1 5h8l2 3h9v12H1z" fill="#e8b830" stroke="#5c4208" strokeWidth="1.300" />
        <path d="M5 11h18l-4 9H1z" fill="#ffe070" stroke="#5c4208" strokeWidth="1.300" />
      </Svg>
    ),
  },
  {
    t: "Help",
    icon: (
      <Svg size="size-4">
        <rect x="1" y="1" width="22" height="22" fill="#dfe4f4" stroke="#667" />
        <circle cx="12" cy="12" r="9" fill="#2446c0" />
        <text x="12" y="18" fontSize="16" fontWeight="bold" textAnchor="middle" fill="#fff" fontFamily="Liberation Serif, serif">?</text>
      </Svg>
    ),
  },
];

type Row = { kind: "head" | "cell" | "pick" | "shade" | "button"; t: string };
const rows: Row[] = [
  { kind: "head", t: "View..." },
  { kind: "cell", t: "P..." },
  { kind: "cell", t: "6..." },
  { kind: "cell", t: "2..." },
  { kind: "pick", t: "" },
  { kind: "head", t: "Cam..." },
  { kind: "cell", t: "5..." },
  { kind: "cell", t: "0.0" },
  { kind: "cell", t: "-..." },
  { kind: "cell", t: "-..." },
  { kind: "cell", t: "2..." },
  { kind: "shade", t: "8..." },
  { kind: "button", t: "P..." },
  { kind: "head", t: "Target" },
  { kind: "cell", t: "0..." },
];

function Chevron({ up, c = "#555" }: { up?: boolean; c?: string }) {
  return (
    <svg viewBox="0 0 10 6" className={`h-[6px] w-[10px] ${up ? "rotate-180" : ""}`} aria-hidden="true">
      <path d="M1 1l4 4 4-4" fill="none" stroke={c} strokeWidth="1.500" />
    </svg>
  );
}

function SidePanel() {
  return (
    <aside className="flex h-[524px] flex-col text-[12px]">
      {panelTabs.map((p) => (
        <button key={p.t} type="button" className="relative flex h-[22px] shrink-0 items-center overflow-hidden bg-[#e9eaf0] pl-1 text-left">
          <svg viewBox="0 0 71 22" className="absolute left-0 top-0 h-[22px] w-[71px]" aria-hidden="true">
            <path d="M.5 21.500V4l4-3.500h48l19 21z" fill="#d5d5d8" stroke="#bcc6dc" />
          </svg>
          <span className="relative flex items-center gap-[2px]">
            {p.icon}
            {p.t}
          </span>
        </button>
      ))}
      <div className="relative flex h-[22px] shrink-0 items-center gap-[2px] overflow-hidden bg-[#e4e6ee] pl-1">
        <svg viewBox="0 0 71 22" className="absolute left-0 top-0 h-[22px] w-[71px]" aria-hidden="true">
          <path d="M.5 22V3.500l3-3h38l19 21.500z" fill="#f7f7fa" stroke="#bcc6dc" />
        </svg>
        <svg viewBox="0 0 16 16" className="relative size-4" fill="none" strokeWidth="4" aria-hidden="true">
          {["#f00", "#ff0", "#0f0", "#0ff", "#00f", "#f0f"].map((c, i) => (
            <circle key={c} cx="8" cy="8" r="5" stroke={c} strokeDasharray="5.300 26.200" strokeDashoffset={-i * 5.23} />
          ))}
        </svg>
        <span className="relative">Pr...</span>
        <svg viewBox="0 0 16 16" className="absolute right-[-3px] size-4" fill="none" stroke="#b5b5b5" aria-hidden="true">
          <circle cx="8" cy="8" r="4" strokeWidth="4" />
          <circle cx="8" cy="8" r="6.500" strokeWidth="2" strokeDasharray="2.500 2.600" />
        </svg>
      </div>
      <div className="flex min-h-0 flex-1 flex-col border-b border-l border-[#bcc6dc] bg-[#f7f7fa] pl-[3px]">
        <div className="flex flex-wrap gap-1 pb-[5px] pt-[2px]">
          <button type="button" aria-label="Camera" className="flex size-[26px] items-center justify-center border border-[#2a6fb0] bg-[#b5d5f0]">
            <Svg size="size-[22px]">
              <path d="M2 7h5l2-4h7l2 4h5v13H1V9z" fill="#3d454c" stroke="#1c2226" />
              <circle cx="13" cy="13" r="5" fill="#888" stroke="#111" strokeWidth="1.500" />
              <circle cx="13" cy="13" r="2.500" fill="#1c3040" />
            </Svg>
          </button>
          <button type="button" aria-label="Viewport" className="flex size-[26px] items-center justify-center border border-[#aaa] bg-[#b8b8b8]">
            <Svg>
              <rect x="1" y="2" width="22" height="20" fill="#a8b4bc" stroke="#333" />
              <rect x="3" y="4" width="18" height="16" stroke="#3ab4e0" />
              <rect x="5" y="6" width="14" height="12" fill="#fff" stroke="#e02020" strokeWidth="1.500" />
            </Svg>
          </button>
          <button type="button" aria-label="Materials" className="flex size-[26px] items-center justify-center border border-[#aaa] bg-[#e0e0e0]">
            <Svg size="size-[22px]">
              <circle cx="8" cy="16" r="6.500" fill="#2446c0" stroke="#0c1c60" />
              <circle cx="15" cy="9" r="4.500" fill="#2446c0" stroke="#0c1c60" />
              <circle cx="20" cy="4" r="3" fill="#4a70d8" stroke="#0c1c60" />
              <circle cx="6" cy="13" r="2" fill="#c8d8ff" />
              <circle cx="14" cy="7" r="1.300" fill="#c8d8ff" />
            </Svg>
          </button>
        </div>
        <div className="flex min-h-0 flex-1">
          <div className="w-[46px] overflow-hidden border-x border-[#e8e9ee]">
            {rows.map((r, i) =>
              r.kind === "head" ? (
                <div key={i} className="flex h-[26px] items-center border-y border-[#e8e9ee] pl-[3px] pt-px">{r.t}</div>
              ) : (
                <div key={i} className="flex h-[21px] border-b border-[#e4e6ec]">
                  <div className="w-[18px] shrink-0" />
                  <div className="w-1 shrink-0 border-r border-[#e4e6ec] bg-white" />
                  <div className={`flex flex-1 items-center ${r.kind === "shade" ? "bg-[#e8e9ee]" : "bg-white"}`}>
                    {r.kind === "pick" ? (
                      <button type="button" aria-label="Projection" className="ml-[2px] flex h-5 flex-1 items-center justify-center border border-[#aaa] bg-[#e1e1e1]">
                        <Chevron />
                      </button>
                    ) : r.kind === "button" ? (
                      <button type="button" className="flex h-[19px] flex-1 items-center border border-[#999] bg-[#e1e1e1] pl-[2px]">{r.t}</button>
                    ) : (
                      <span className="pl-[3px]">{r.t}</span>
                    )}
                  </div>
                </div>
              )
            )}
          </div>
          <div className="ml-1 flex w-[15px] flex-col items-center bg-[#f0f0f0]">
            <div className="flex h-4 items-center">
              <Chevron up />
            </div>
            <div className="h-[200px] w-full bg-[#cdcdcd]" />
            <div className="mt-auto flex h-4 items-center">
              <Chevron />
            </div>
          </div>
        </div>
      </div>
    </aside>
  );
}

const statusCells: { t: string; w: string; bold?: boolean }[] = [
  { t: "CPlane", w: "w-[53px]" },
  { t: "x -31.240", w: "w-[88px]" },
  { t: "y 24.777", w: "w-[88px]" },
  { t: "0.000", w: "w-[88px]" },
  { t: "Meters", w: "w-[88px]" },
  { t: "■ Default", w: "w-[167px] pl-1 !text-left" },
  { t: "Grid Snap", w: "w-[66px]", bold: true },
  { t: "Ortho", w: "w-[44px]", bold: true },
  { t: "Planar", w: "w-[48px]" },
  { t: "Osnap", w: "w-[47px]", bold: true },
  { t: "SmartTrack", w: "w-[74px]", bold: true },
  { t: "Gumball", w: "w-[60px]" },
  { t: "Record History", w: "w-[92px]" },
  { t: "Filter", w: "w-[40px]" },
  { t: "Minutes from last save: 11", w: "w-[318px] pl-1 !text-left" },
];

function RhinoWindow() {
  return (
    <section className="flex min-h-0 flex-1 flex-col bg-[#e9eaf0]">
      <header className="flex h-[41px] shrink-0 items-start bg-white pl-[7px] text-[11px] text-[#666]">
        <svg viewBox="0 0 16 16" className="mt-[3px] size-[14px]" aria-hidden="true">
          <path d="M0 0h16v16H0z" fill="#222" />
          <path d="M2 3l5 4 1-3 3 6-4 4z" fill="#fff" />
        </svg>
        <span className="ml-[6px] mt-[3px]">Untitled - Undefined (Meters) - Rhinoceros</span>
        <div className="ml-auto mt-[5px] flex gap-[36px] pr-[17px]">
          <button type="button" aria-label="Restore">
            <svg viewBox="0 0 10 10" className="size-[10px]" fill="none"><path d="M.5 2.500h7v7h-7zM2.500 2.500v-2h7v7h-2" stroke="#999" /></svg>
          </button>
          <button type="button" aria-label="Close window">
            <svg viewBox="0 0 10 10" className="size-[10px]"><path d="M0 0l10 10M10 0L0 10" stroke="#999" /></svg>
          </button>
        </div>
      </header>
      <div className="mt-[5px] flex h-[29px] shrink-0 justify-end border-b border-[#bcc6dc] bg-white">
        <div className="flex w-[14px] flex-col items-center justify-around bg-[#f0f0f0] pb-1">
          <Chevron up />
          <Chevron />
        </div>
      </div>
      <div className="flex h-[21px] shrink-0 justify-end bg-white">
        <div className="flex w-[13px] flex-col items-center justify-around border border-[#999] bg-[#f0f0f0]">
          <div className="rotate-180">
            <Caret />
          </div>
          <Caret />
        </div>
      </div>
      <div className="flex h-[22px] shrink-0 items-center justify-end border-y border-[#bcc6dc]">
        <svg viewBox="0 0 16 16" className="-mr-px size-4" fill="none" stroke="#999" aria-hidden="true">
          <circle cx="8" cy="8" r="2.500" />
          <circle cx="8" cy="8" r="5" />
          <circle cx="8" cy="8" r="6.500" strokeWidth="2" strokeDasharray="2.500 2.600" />
        </svg>
      </div>
      <div className="flex min-h-0 flex-1 justify-end">
        <div className="mr-[9px] mt-[39px] flex h-[513px] w-[20px] flex-col">
          <div className="h-[256px] bg-[#8e9399]" />
          <div className="h-[2px] bg-[#d8dce6]" />
          <div className="h-[99px] bg-[#8e9399]" />
          <div className="h-[34px] border-y-2 border-black bg-[#a83c40] pt-[5px]">
            <div className="h-[20px] border-t-2 border-b border-black" />
          </div>
          <div className="h-[22px] border-b-2 border-black bg-[#999da3]" />
          <div className="flex-1 bg-[#8e9399]" />
        </div>
        <div className="mt-[47px] w-[71px]">
          <SidePanel />
        </div>
      </div>
      <footer className="flex h-[20px] shrink-0 overflow-hidden border-t border-[#bcc6dc] text-[11px] leading-[22px]">
        {statusCells.map((s) => (
          <div key={s.t} className={`shrink-0 overflow-hidden whitespace-nowrap border-r border-[#bcc6dc] text-center ${s.w} ${s.bold ? "bg-[#dde6ee] font-bold" : ""}`}>{s.t}</div>
        ))}
      </footer>
    </section>
  );
}

/* ---------- taskbar ---------- */

function Taskbar() {
  const tray = "flex h-full items-center justify-center";
  return (
    <footer className="relative z-20 flex h-[30px] shrink-0 items-center bg-linear-to-r from-[#0e1d22] via-[#141c20] to-[#0a181d] text-[12px] text-white">
      <button type="button" aria-label="Start" className={`w-[42px] ${tray}`}>
        <svg viewBox="0 0 16 16" className="size-4"><path d="M0 2.300l6.500-.9v6.100H0zM7.300 1.300L16 0v7.500H7.300zM0 8.300h6.500v6.200L0 13.600zM7.300 8.300H16V16l-8.700-1.200z" fill="#fff" /></svg>
      </button>
      <button type="button" aria-label="Task view" className={`w-[30px] ${tray}`}>
        <svg viewBox="0 0 16 16" className="size-4" fill="none" stroke="#fff">
          <path d="M1.500 5.500h9v6h-9zM.5.5v2h11v-2M.5 15.500v-2h11v2M14.500 0v4M14.500 8v8" />
          <path d="M13 5h3v2h-3z" fill="#fff" stroke="none" />
        </svg>
      </button>
      <button type="button" aria-label="File Explorer" className={`w-[48px] ${tray}`}>
        <svg viewBox="0 0 16 16" className="size-4">
          <path d="M0 1h6l1 2h9v11H0z" fill="#f8d775" />
          <path d="M0 5h16v3H0z" fill="#ffe9a6" />
          <path d="M3 15V9h10v6h-3v-3H6v3z" fill="#3fa9e0" />
        </svg>
      </button>
      <button type="button" aria-label="Chrome" className={`w-[26px] ${tray}`}>
        <svg viewBox="0 0 16 16" className="size-[15px]">
          <circle cx="8" cy="8" r="7.500" fill="#fbc116" />
          <path d="M8 8L1.500 4.200A7.500 7.500 0 0 1 14.700 4.500H8z" fill="#e33b2e" />
          <path d="M8 8l-3 .5L1.500 4.200A7.500 7.500 0 0 0 7.500 15.500L10.500 10z" fill="#2da94f" />
          <circle cx="8" cy="8" r="3.600" fill="#fff" />
          <circle cx="8" cy="8" r="2.800" fill="#4586f3" />
        </svg>
      </button>
      <button type="button" aria-label="Edge" className={`w-[47px] ${tray}`}>
        <svg viewBox="0 0 16 16" className="size-4"><path d="M0 8Q1 0 8.500 0 16 1 15.500 9H5.500q1 4 5 4 2.500 0 4.500-1.300V15q-3 1.300-6 1Q3 15.500 3 10q0-3 3.500-5Q2 5 0 8zM5.600 6.500H11Q11 4 8.500 3.800 6 4 5.600 6.500z" fill="#0d84e3" /></svg>
      </button>
      <button type="button" className="flex h-full w-[152px] items-center gap-1 overflow-hidden whitespace-nowrap border-b-2 border-[#76b9ed] pl-1 pt-[2px]">
        <svg viewBox="0 0 16 16" className="size-4 shrink-0">
          <circle cx="8" cy="8.500" r="7.500" fill="#ff6a1c" />
          <circle cx="8.500" cy="8.500" r="3.800" fill="#5b3cb8" />
          <path d="M11 0q5 4 4.500 9-.5 5-5.500 6.500 3-3 2-7T9 4q0-2 2-4z" fill="#ffcb2e" />
          <path d="M1 4l3 2 3 0-2 3q-4 0-4-5z" fill="#ff3a50" />
        </svg>
        <span className="font-['Noto_Sans','DejaVu_Sans',sans-serif]">تشخیص ندادن دیوار زی...</span>
      </button>
      <button type="button" className="ml-[5px] flex h-full w-[160px] items-center gap-1 whitespace-nowrap border-b-2 border-[#76b9ed] bg-[#465055] pl-2 pt-[2px]">
        <svg viewBox="0 0 16 16" className="size-4 shrink-0">
          <path d="M0 0h16v16H0z" fill="#111" />
          <path d="M0 0q5 2 6 6l2-4q1 5 3 5l3 1-2 3-6 5-6-5 1-3z" fill="#fff" />
          <path d="M4 9l4 2-1 3" stroke="#111" fill="none" />
          <text x="13" y="7" fontSize="8" fontWeight="bold" fill="#fff" textAnchor="middle" fontFamily="Liberation Sans, sans-serif">6</text>
        </svg>
        Untitled - Undefined ...
      </button>
      <div className="ml-auto flex h-full items-center pr-[21px]">
        <svg viewBox="0 0 16 16" className="mr-[14px] size-4" fill="none" stroke="#fff" strokeWidth="1.200" aria-label="People">
          <circle cx="10.500" cy="4" r="2.500" />
          <circle cx="5" cy="8.500" r="2.200" />
          <path d="M1 15q0-4.500 4-4.500T9 15M8 7.500q6-2.500 6.500 4" />
        </svg>
        <span className="mr-3">
          <Chevron up c="#fff" />
        </span>
        <svg viewBox="0 0 16 16" className="mr-[9px] size-4" fill="none" stroke="#fff" aria-label="Battery">
          <path d="M6.500 4.500h8v7h-8M15.500 6v4M8.500 6l4 4M12.500 6l-4 4M3 5v3M1 3v3h4V3M3 8v5" />
        </svg>
        <svg viewBox="0 0 16 16" className="mr-[9px] size-4" fill="none" stroke="#fff" strokeWidth="1.200" aria-label="Wi-Fi">
          <path d="M2 14Q2 3 14 3M5 14q0-8 9-8M8 14q0-5 6-5" />
          <circle cx="12.500" cy="13" r="1.500" fill="#fff" />
        </svg>
        <svg viewBox="0 0 16 16" className="mr-[10px] size-4" fill="none" stroke="#fff" aria-label="Volume">
          <path d="M1 5.500h2.500L7 2.500v11l-3.500-3H1zM9 6q1.500 2 0 4M11 4q3 4 0 8M13 2.500q4.500 5.500 0 11" />
        </svg>
        <svg viewBox="0 0 16 16" className="mr-[14px] size-4" fill="none" stroke="#fff" strokeWidth="1.200" aria-label="Pen">
          <path d="M6 11l4-9 2.500 1-4 9-3 2zM6 7Q0 7 1 11.500T7 14M10 10q4 1 5-3t-3 0" />
        </svg>
        <span className="mr-[15px]">ENG</span>
        <time className="mr-[20px]">1:44 PM</time>
        <button type="button" aria-label="Notifications">
          <svg viewBox="0 0 18 18" className="size-[18px]" fill="none" stroke="#fff" strokeWidth="1.200"><path d="M1.500 2.500h15v11H12l-2.500 3v-3h-8z" /></svg>
        </button>
      </div>
      <div className="absolute right-0 h-full w-px bg-[#59656a]" />
    </footer>
  );
}

export default function App() {
  return (
    <div className={`relative flex h-screen flex-col overflow-hidden text-black ${UI}`}>
      <RhinoWindow />
      <GrasshopperWindow />
      <Taskbar />
    </div>
  );
}
